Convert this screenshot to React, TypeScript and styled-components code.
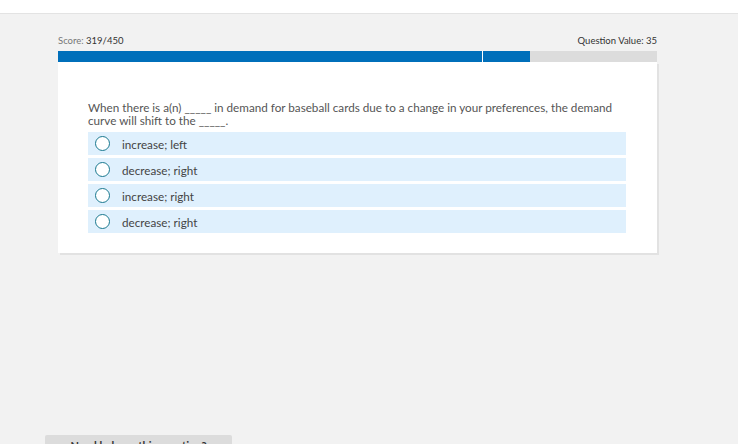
import styled, { createGlobalStyle } from "styled-components";

const GlobalStyle = createGlobalStyle`
  html, body {
    margin: 0;
    padding: 0;
    background: #f2f2f2;
    font-family: Lato, "Liberation Sans", sans-serif;
    overflow: hidden;
  }
`;

const Page = styled.div`
  position: relative;
  width: 738px;
  height: 444px;
  overflow: hidden;
  display: flex;
  flex-direction: column;
`;

const TopBar = styled.div`
  height: 13px;
  background: #ffffff;
  border-bottom: 1px solid #e3e3e3;
  flex-shrink: 0;
`;

const Main = styled.div`
  width: 599px;
  margin-left: 58px;
  padding-top: 20px;
  display: flex;
  flex-direction: column;
`;

const Header = styled.div`
  display: flex;
  justify-content: space-between;
  align-items: flex-end;
  font-size: 9.5px;
  height: 12px;
  margin-bottom: 5px;
  color: #333;
`;

const Label = styled.span`
  color: #777;
`;

const Progress = styled.div`
  height: 11px;
  background: #dcdcdc;
  display: flex;
`;

const Segment = styled.div<{ $w: number }>`
  width: ${(p) => p.$w}px;
  background: #006fba;
  & + & {
    border-left: 1px solid #ffffff;
  }
`;

const Card = styled.div`
  background: #ffffff;
  box-shadow: 2px 2px 0 #e2e2e2;
  padding: 39px 31px 20px 30px;
`;

const Question = styled.p`
  margin: 0 0 5px;
  font-size: 11.7px;
  line-height: 13px;
  color: #555;
`;

const Options = styled.div`
  display: flex;
  flex-direction: column;
  gap: 3px;
`;

const Option = styled.label`
  height: 23px;
  background: #dff0fd;
  display: flex;
  align-items: center;
  padding-left: 7px;
  gap: 12px;
  font-size: 11.7px;
  color: #444;
  cursor: pointer;
`;

const Radio = styled.span`
  width: 13px;
  height: 13px;
  border: 1.5px solid #19788f;
  border-radius: 50%;
  background: #ffffff;
  flex-shrink: 0;
`;

const HelpButton = styled.button`
  position: absolute;
  left: 45px;
  top: 435px;
  width: 187px;
  height: 30px;
  border: none;
  border-radius: 2px;
  background: #dcdcdc;
  color: #333;
  font-family: Lato, "Liberation Sans", sans-serif;
  font-size: 11px;
  font-weight: 700;
  padding: 4px 0 0;
  text-align: center;
  display: flex;
  justify-content: center;
  align-items: flex-start;
`;

const options = ["increase; left", "decrease; right", "increase; right", "decrease; right"];

export default function App() {
  return (
    <>
      <GlobalStyle />
      <Page>
        <TopBar />
        <Main>
          <Header>
            <span>
              <Label>Score:</Label> 319/450
            </span>
            <span>Question Value: 35</span>
          </Header>
          <Progress>
            <Segment $w={424} />
            <Segment $w={47} />
          </Progress>
          <Card>
            <Question>
              When there is a(n) _____ in demand for baseball cards due to a change in your
              preferences, the demand curve will shift to the _____.
            </Question>
            <Options>
              {options.map((o, i) => (
                <Option key={i}>
                  <Radio />
                  {o}
                </Option>
              ))}
            </Options>
          </Card>
        </Main>
        <HelpButton>Need help on this question?</HelpButton>
      </Page>
    </>
  );
}
